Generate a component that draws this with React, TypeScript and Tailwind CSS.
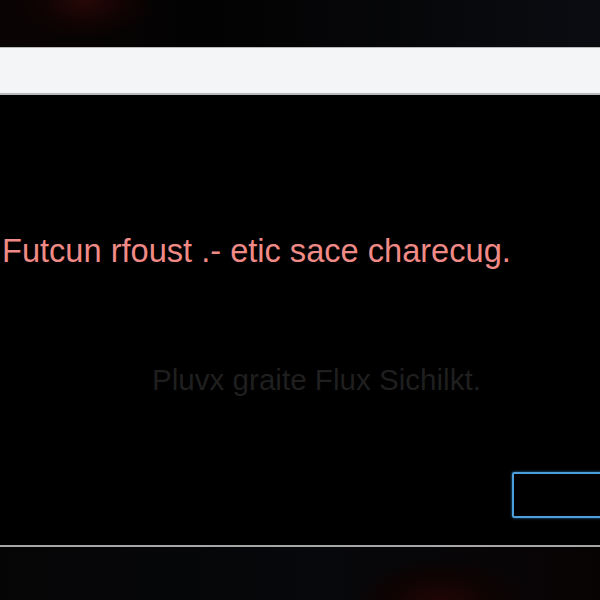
import React from "react";

const App = () => {
  return (
    <div className="w-[600px] h-[600px] flex flex-col bg-black overflow-hidden font-['Liberation_Sans',Arial,sans-serif]">
      <div className="h-[47px] shrink-0 bg-[radial-gradient(ellipse_70px_40px_at_85px_0px,#260806_0%,#100303_60%,transparent_100%),linear-gradient(to_right,#0a0303,#020202_35%,#0b0c11)]" />
      <div className="h-[48px] shrink-0 border-t border-b-2 border-[#b9b9b9] bg-[#f4f5f6]" />
      <main className="h-[450px] shrink-0 flex flex-col bg-black">
        <p className="mt-[140px] pl-[2px] text-[32.6px] leading-none text-[#f08a86] whitespace-nowrap">
          Futcun rfoust .- etic sace charecug.
        </p>
        <p className="mt-[97px] pl-[152px] text-[29.6px] leading-none text-[#1f1f1f] whitespace-nowrap">
          Pluvx graite Flux Sichilkt.
        </p>
        <div className="mt-[78px] ml-[512px] w-[100px] h-[46px] border-2 border-[#4d9fdc] rounded-[2px] shadow-[0_0_3px_#2a6fa8]" />
      </main>
      <div className="h-[2px] shrink-0 bg-[#a6a6a6]" />
      <div className="flex-1 bg-[radial-gradient(ellipse_90px_45px_at_440px_56px,#200604_0%,#0e0303_60%,transparent_100%),linear-gradient(to_right,#050506,#07080b_55%,#080303)]" />
    </div>
  );
};

export default App;
